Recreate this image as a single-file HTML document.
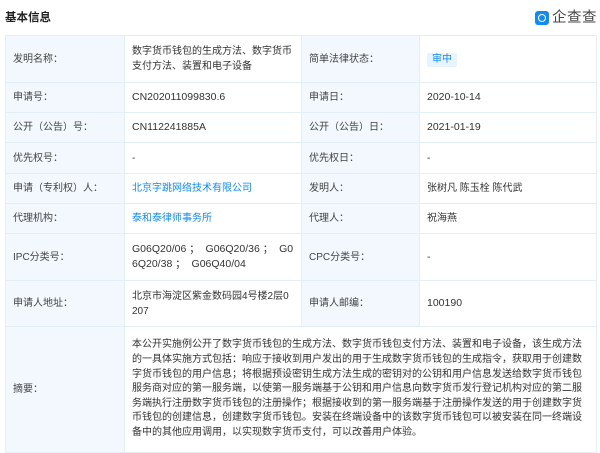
<!DOCTYPE html>
<html><head><meta charset="utf-8"><style>
*{margin:0;padding:0;box-sizing:border-box}
body{width:600px;height:452px;overflow:hidden;background:#fff;font-family:"Liberation Sans","Noto Sans CJK SC",sans-serif;color:#333;font-size:10px;position:relative}
.t{position:absolute;left:5px;top:7px;font-weight:bold;font-size:11.5px;color:#222;line-height:22px}
.logo{position:absolute;left:535px;top:11px;width:14px;height:14px;border-radius:3px;background:#128bed}
.logo:after{content:"";position:absolute;left:3px;top:3px;width:6px;height:6px;border:1.5px solid #fff;border-radius:50%}
.lt{position:absolute;left:552px;top:8px;font-size:14.5px;color:#444;letter-spacing:0.5px;line-height:20px}
table{position:absolute;left:5px;top:35px;width:591px;border-collapse:collapse;table-layout:fixed}
td{border:1px solid #e4eef6;padding:0 6px 0 7px;line-height:15px;vertical-align:middle;word-break:break-all}
td.l{background:#f2f8fd;color:#444}
.a{color:#128bed}
.n{font-size:10.5px;white-space:nowrap}
.b{display:inline-block;background:#e7f3fd;color:#128bed;padding:0 5px;line-height:14px;border-radius:2px}
.ab{line-height:14.6px;padding:6px 5px 6px 7px}
</style></head><body>
<div class="t">基本信息</div>
<div class="logo"></div><div class="lt">企查查</div>
<table>
<colgroup><col style="width:119px"><col style="width:177px"><col style="width:118px"><col style="width:177px"></colgroup>
<tr style="height:47px"><td class="l">发明名称：</td><td>数字货币钱包的生成方法、数字货币支付方法、装置和电子设备</td><td class="l">简单法律状态：</td><td><span class="b">审中</span></td></tr>
<tr style="height:30px"><td class="l">申请号：</td><td class="n">CN202011099830.6</td><td class="l">申请日：</td><td class="n">2020-10-14</td></tr>
<tr style="height:30px"><td class="l">公开（公告）号：</td><td class="n">CN112241885A</td><td class="l">公开（公告）日：</td><td class="n">2021-01-19</td></tr>
<tr style="height:31px"><td class="l">优先权号：</td><td>-</td><td class="l">优先权日：</td><td>-</td></tr>
<tr style="height:30px"><td class="l">申请（专利权）人：</td><td class="a">北京字跳网络技术有限公司</td><td class="l">发明人：</td><td>张树凡 陈玉栓 陈代武</td></tr>
<tr style="height:30px"><td class="l">代理机构：</td><td class="a">泰和泰律师事务所</td><td class="l">代理人：</td><td>祝海燕</td></tr>
<tr style="height:47px"><td class="l">IPC分类号：</td><td class="n">G06Q20/06 ；&nbsp; G06Q20/36 ；&nbsp; G0<br>6Q20/38 ；&nbsp; G06Q40/04</td><td class="l">CPC分类号：</td><td>-</td></tr>
<tr style="height:46px"><td class="l">申请人地址：</td><td><span style="white-space:nowrap">北京市海淀区紫金数码园4号楼2层0</span><br>207</td><td class="l">申请人邮编：</td><td class="n">100190</td></tr>
<tr style="height:126px"><td class="l">摘要：</td><td colspan="3" class="ab">本公开实施例公开了数字货币钱包的生成方法、数字货币钱包支付方法、装置和电子设备，该生成方法的一具体实施方式包括：响应于接收到用户发出的用于生成数字货币钱包的生成指令，获取用于创建数字货币钱包的用户信息；将根据预设密钥生成方法生成的密钥对的公钥和用户信息发送给数字货币钱包服务商对应的第一服务端，以使第一服务端基于公钥和用户信息向数字货币发行登记机构对应的第二服务端执行注册数字货币钱包的注册操作；根据接收到的第一服务端基于注册操作发送的用于创建数字货币钱包的创建信息，创建数字货币钱包。安装在终端设备中的该数字货币钱包可以被安装在同一终端设备中的其他应用调用，以实现数字货币支付，可以改善用户体验。</td></tr>
</table>
</body></html>
